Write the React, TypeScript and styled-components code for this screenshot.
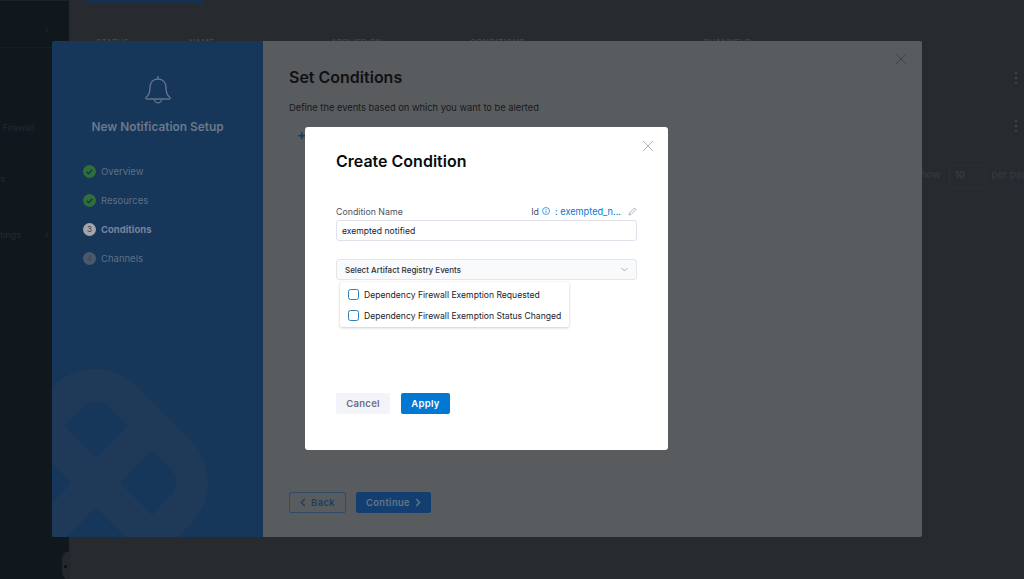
import styled, { createGlobalStyle } from 'styled-components'

const Global = createGlobalStyle`
  html, body {
    margin: 0;
    padding: 0;
    overflow: hidden;
    background: #272b2f;
  }
  * {
    box-sizing: border-box;
  }
`

const Page = styled.div`
  position: relative;
  width: 1024px;
  height: 579px;
  display: flex;
  overflow: hidden;
  font-family: Inter, 'Liberation Sans', sans-serif;
`

const Sidebar = styled.div`
  width: 69px;
  flex: none;
  background: #10171d;
  padding-top: 3px;
  border-top: 1px solid #1a222a;
  font-size: 9px;
  color: #212c35;
`

const NavItem = styled.div<{ $h: number; $pad: number; $pb?: number; $line?: boolean }>`
  height: ${p => p.$h}px;
  display: flex;
  align-items: flex-end;
  justify-content: flex-end;
  padding: 0 ${p => p.$pad}px ${p => p.$pb ?? 14}px 0;
  white-space: nowrap;
  border-bottom: ${p => (p.$line ? '1px solid #161e25' : 'none')};
`

const NavChevron = styled.span`
  position: absolute;
  left: 45px;
  font-size: 10px;
  color: #212c35;
`

const Main = styled.div`
  flex: 1;
  background: #272b2f;
  padding-left: 16px;
  min-width: 0;
`

const TopButton = styled.div`
  width: 119px;
  height: 4px;
  background: #16304d;
  border-radius: 0 0 2px 2px;
`

const TableHead = styled.div`
  display: grid;
  grid-template-columns: 93px 142px 139px 233px 1fr;
  margin: 33px 0 0 11px;
  font-size: 8px;
  font-weight: 500;
  letter-spacing: 0.4px;
  color: #45494e;
`

const KebabRow = styled.div<{ $top: number }>`
  display: flex;
  justify-content: flex-end;
  margin-top: ${p => p.$top}px;
  padding-right: 6px;
`

const Pager = styled.div`
  display: flex;
  align-items: flex-start;
  margin: 32px 0 0 829px;
  width: 150px;
  white-space: nowrap;
  font-size: 10px;
  line-height: 18px;
  color: #373c40;
`

const PagerSelect = styled.div`
  width: 37px;
  height: 23px;
  margin: 0 5px 0 9px;
  padding: 0 0 4px 5px;
  display: flex;
  align-items: center;
  border: 1px solid #2b2f33;
  border-radius: 2px;
  color: #3e4348;
  font-size: 9px;
`

const Handle = styled.div`
  position: absolute;
  left: 62px;
  top: 552px;
  width: 8px;
  height: 28px;
  border-radius: 8px 0 0 14px / 14px 0 0 14px;
  background: #24282c;
  display: flex;
  align-items: center;
  padding-left: 2px;
`

const HandleDot = styled.div`
  width: 3px;
  height: 3px;
  border-radius: 50%;
  background: #0b0e11;
`

const Wizard = styled.div`
  position: absolute;
  left: 52px;
  top: 41px;
  width: 870px;
  height: 496px;
  display: flex;
  border-radius: 2px;
  overflow: hidden;
`

const WizardSide = styled.div`
  position: relative;
  width: 211px;
  flex: none;
  background: #16365a;
  padding-top: 34px;
  display: flex;
  flex-direction: column;
  overflow: hidden;
`

const Watermark = styled.svg`
  position: absolute;
  left: 0;
  bottom: 0;
`

const BellWrap = styled.div`
  display: flex;
  justify-content: center;
  height: 30px;
`

const WizardTitle = styled.div`
  margin-top: 14px;
  text-align: center;
  font-size: 11.85px;
  line-height: 16px;
  font-weight: 600;
  color: #6a7a8c;
`

const Steps = styled.div`
  margin: 29px 0 0 31px;
  display: flex;
  flex-direction: column;
  gap: 15px;
`

const Step = styled.div<{ $active?: boolean }>`
  height: 14px;
  display: flex;
  align-items: center;
  gap: 5px;
  font-size: 9.5px;
  font-weight: ${p => (p.$active ? 700 : 400)};
  color: ${p => (p.$active ? '#76849a' : '#5f7084')};
`

const StepNumber = styled.span<{ $active?: boolean }>`
  width: 13px;
  height: 13px;
  border-radius: 50%;
  display: flex;
  align-items: center;
  justify-content: center;
  font-size: 8px;
  font-weight: 400;
  background: ${p => (p.$active ? '#a3a6aa' : '#4b5a6b')};
  color: ${p => (p.$active ? '#3a3f46' : '#3a4654')};
`

const WizardBody = styled.div`
  position: relative;
  flex: 1;
  background: #595c5f;
  padding: 26px 0 0 26px;
`

const WizardHeading = styled.div`
  font-size: 16px;
  line-height: 20px;
  font-weight: 600;
  color: #0f1114;
`

const WizardText = styled.div`
  margin-top: 14px;
  font-size: 9.3px;
  line-height: 14px;
  color: #17191c;
`

const PlusMark = styled.div`
  margin: 12px 0 0 8px;
  font-size: 14px;
  line-height: 16px;
  font-weight: 600;
  color: #173a63;
`

const WizardFooter = styled.div`
  position: absolute;
  left: 26px;
  bottom: 24px;
  display: flex;
  gap: 10px;
`

const WizardButton = styled.div<{ $primary?: boolean }>`
  height: 21px;
  width: ${p => (p.$primary ? 75 : 57)}px;
  display: flex;
  align-items: center;
  justify-content: center;
  gap: 5px;
  border-radius: 2px;
  font-size: 9.3px;
  font-weight: 600;
  letter-spacing: 0.4px;
  background: ${p => (p.$primary ? '#133f70' : 'transparent')};
  border: 1px solid ${p => (p.$primary ? '#133f70' : '#2f4966')};
  color: ${p => (p.$primary ? '#647689' : '#1f3d60')};
`

const CloseIcon = styled.svg<{ $x: number; $y: number }>`
  position: absolute;
  right: ${p => p.$x}px;
  top: ${p => p.$y}px;
`

const Modal = styled.div`
  position: absolute;
  left: 305px;
  top: 127px;
  width: 363px;
  height: 323px;
  background: #fff;
  border-radius: 3px;
  padding: 24px 31px 0;
`

const ModalTitle = styled.div`
  font-size: 16px;
  line-height: 20px;
  font-weight: 600;
  color: #0b0b0d;
`

const LabelRow = styled.div`
  margin-top: 33px;
  height: 14px;
  display: flex;
  justify-content: space-between;
  align-items: center;
  font-size: 8.8px;
  color: #4f5162;
`

const IdGroup = styled.div`
  display: flex;
  align-items: center;
  gap: 3px;
`

const IdValue = styled.span`
  margin-left: 2px;
  color: #0278d5;
  font-size: 9.2px;
`

const PencilIcon = styled.svg`
  margin-left: 4px;
`

const NameInput = styled.div`
  margin-top: 2px;
  height: 21px;
  width: 301px;
  display: flex;
  align-items: center;
  padding-left: 5px;
  border: 1px solid #dfe0ea;
  border-radius: 3px;
  font-size: 8.6px;
  color: #22222a;
`

const EventSelect = styled.div`
  margin-top: 18px;
  height: 21px;
  width: 301px;
  display: flex;
  align-items: center;
  justify-content: space-between;
  padding: 0 8px;
  background: #f8fafc;
  border: 1px solid #e4e6ee;
  border-radius: 3px;
  font-size: 8px;
  font-weight: 500;
  color: #2d2e38;
`

const Menu = styled.div`
  margin: 2px 0 0 4px;
  width: 229px;
  height: 45px;
  padding: 2px 8px;
  background: #fff;
  border-radius: 2px;
  box-shadow: 0 0 1px rgba(40, 41, 61, 0.16), 0 1px 3px rgba(96, 97, 112, 0.28);
`

const MenuItem = styled.div`
  height: 21px;
  display: flex;
  align-items: center;
  gap: 5px;
  font-size: 8.6px;
  white-space: nowrap;
  color: #22222a;
`

const Checkbox = styled.span`
  width: 11px;
  height: 11px;
  flex: none;
  border: 1px solid #2d7fb8;
  border-radius: 2.5px;
`

const ModalActions = styled.div`
  margin-top: 66px;
  display: flex;
  gap: 11px;
`

const ModalButton = styled.div<{ $primary?: boolean }>`
  height: 21px;
  width: ${p => (p.$primary ? 49 : 54)}px;
  display: flex;
  align-items: center;
  justify-content: center;
  border-radius: 2px;
  font-size: 9.5px;
  font-weight: 600;
  letter-spacing: 0.3px;
  background: ${p => (p.$primary ? '#0278d5' : '#f3f3fa')};
  color: ${p => (p.$primary ? '#fff' : '#6b6d85')};
`

const Kebab = () => (
  <svg width="4" height="14" viewBox="0 0 4 14">
    <circle cx="2" cy="2" r="1.2" fill="#3e4347" />
    <circle cx="2" cy="7" r="1.2" fill="#3e4347" />
    <circle cx="2" cy="12" r="1.2" fill="#3e4347" />
  </svg>
)

const Bell = () => (
  <svg width="28" height="30" viewBox="0 0 28 30" fill="none" stroke="#62738a" strokeWidth="1.4" strokeLinejoin="round">
    <path d="M14 1v3" />
    <path d="M14 4c-5 0-8 3.6-8 8.4 0 5-1 7.6-3.6 9.6-1 .8-.6 2 .6 2h22c1.2 0 1.6-1.2.6-2-2.6-2-3.6-4.6-3.6-9.6C22 7.6 19 4 14 4z" />
    <path d="M10.5 24.4a3.5 3.5 0 0 0 7 0" />
  </svg>
)

const Check = () => (
  <svg width="13" height="13" viewBox="0 0 13 13">
    <circle cx="6.5" cy="6.5" r="6.5" fill="#2e7038" />
    <path d="M3.6 6.8l2 2 3.8-4" fill="none" stroke="#16365a" strokeWidth="1.5" />
  </svg>
)

const Chevron = ({ dir, color }: { dir: 'left' | 'right'; color: string }) => (
  <svg width="6" height="9" viewBox="0 0 6 9" fill="none" stroke={color} strokeWidth="1.4">
    <path d={dir === 'left' ? 'M4.8 1L1.4 4.5l3.4 3.5' : 'M1.2 1l3.4 3.5L1.2 8'} />
  </svg>
)

const steps = ['Overview', 'Resources']

export default function App() {
  return (
    <Page>
      <Global />
      <Sidebar>
        <NavItem $h={44} $pad={69} $pb={11} $line>
          <NavChevron>›</NavChevron>
        </NavItem>
        <NavItem $h={99} $pad={34}>Firewall</NavItem>
        <NavItem $h={51} $pad={64}>s</NavItem>
        <NavItem $h={56} $pad={48}>
          tings
          <NavChevron>›</NavChevron>
        </NavItem>
      </Sidebar>
      <Main>
        <TopButton />
        <TableHead>
          <span>STATUS</span>
          <span>NAME</span>
          <span>APPLIED ON</span>
          <span>CONDITIONS</span>
          <span>CHANNELS</span>
        </TableHead>
        <KebabRow $top={24}><Kebab /></KebabRow>
        <KebabRow $top={34}><Kebab /></KebabRow>
        <Pager>
          Show
          <PagerSelect>10</PagerSelect>
          per page
        </Pager>
      </Main>
      <Handle><HandleDot /></Handle>

      <Wizard>
        <WizardSide>
          <Watermark width="211" height="180" viewBox="52 357 211 180">
            <rect x="-2.5" y="384.5" width="195" height="195" rx="60" fill="#1f3a58" transform="rotate(45 95 482)" />
            <path d="M96 458L64 426l19-19q13-11 26 0l19 19z" fill="#16365a" />
            <path d="M120 483l32-33 19 19q11 13 0 26l-19 20z" fill="#16365a" />
            <path d="M52 463l20 20-20 20z" fill="#16365a" />
            <path d="M96 507l30 30H67z" fill="#16365a" />
          </Watermark>
          <BellWrap><Bell /></BellWrap>
          <WizardTitle>New Notification Setup</WizardTitle>
          <Steps>
            {steps.map(s => (
              <Step key={s}><Check />{s}</Step>
            ))}
            <Step $active><StepNumber $active>3</StepNumber>Conditions</Step>
            <Step><StepNumber>4</StepNumber>Channels</Step>
          </Steps>
        </WizardSide>
        <WizardBody>
          <CloseIcon $x={16} $y={13} width="10" height="10" viewBox="0 0 10 10" stroke="#3f4347" strokeWidth="1">
            <path d="M0 0l10 10M10 0L0 10" />
          </CloseIcon>
          <WizardHeading>Set Conditions</WizardHeading>
          <WizardText>Define the events based on which you want to be alerted</WizardText>
          <PlusMark>+</PlusMark>
          <WizardFooter>
            <WizardButton>
              <Chevron dir="left" color="#1f3d60" />
              Back
            </WizardButton>
            <WizardButton $primary>
              Continue
              <Chevron dir="right" color="#647689" />
            </WizardButton>
          </WizardFooter>
        </WizardBody>
      </Wizard>

      <Modal>
        <CloseIcon $x={15} $y={14} width="10" height="10" viewBox="0 0 10 10" stroke="#b0b3c0" strokeWidth="1">
          <path d="M0 0l10 10M10 0L0 10" />
        </CloseIcon>
        <ModalTitle>Create Condition</ModalTitle>
        <LabelRow>
          <span>Condition Name</span>
          <IdGroup>
            Id
            <svg width="8" height="8" viewBox="0 0 8 8" fill="none" stroke="#0278d5" strokeWidth="0.7">
              <circle cx="4" cy="4" r="3.5" />
              <path d="M4 3.4v2.6M4 2v.8" />
            </svg>
            <IdValue>: exempted_n...</IdValue>
            <PencilIcon width="9" height="9" viewBox="0 0 9 9" fill="none" stroke="#9a9cac" strokeWidth="0.8">
              <path d="M1 8l.5-2L6.5 1 8 2.5 3 7.5z" />
            </PencilIcon>
          </IdGroup>
        </LabelRow>
        <NameInput>exempted notified</NameInput>
        <EventSelect>
          Select Artifact Registry Events
          <svg width="7" height="5" viewBox="0 0 7 5" fill="none" stroke="#a5a7b5" strokeWidth="0.9">
            <path d="M.5 1l3 3 3-3" />
          </svg>
        </EventSelect>
        <Menu>
          <MenuItem><Checkbox />Dependency Firewall Exemption Requested</MenuItem>
          <MenuItem><Checkbox />Dependency Firewall Exemption Status Changed</MenuItem>
        </Menu>
        <ModalActions>
          <ModalButton>Cancel</ModalButton>
          <ModalButton $primary>Apply</ModalButton>
        </ModalActions>
      </Modal>
    </Page>
  )
}
